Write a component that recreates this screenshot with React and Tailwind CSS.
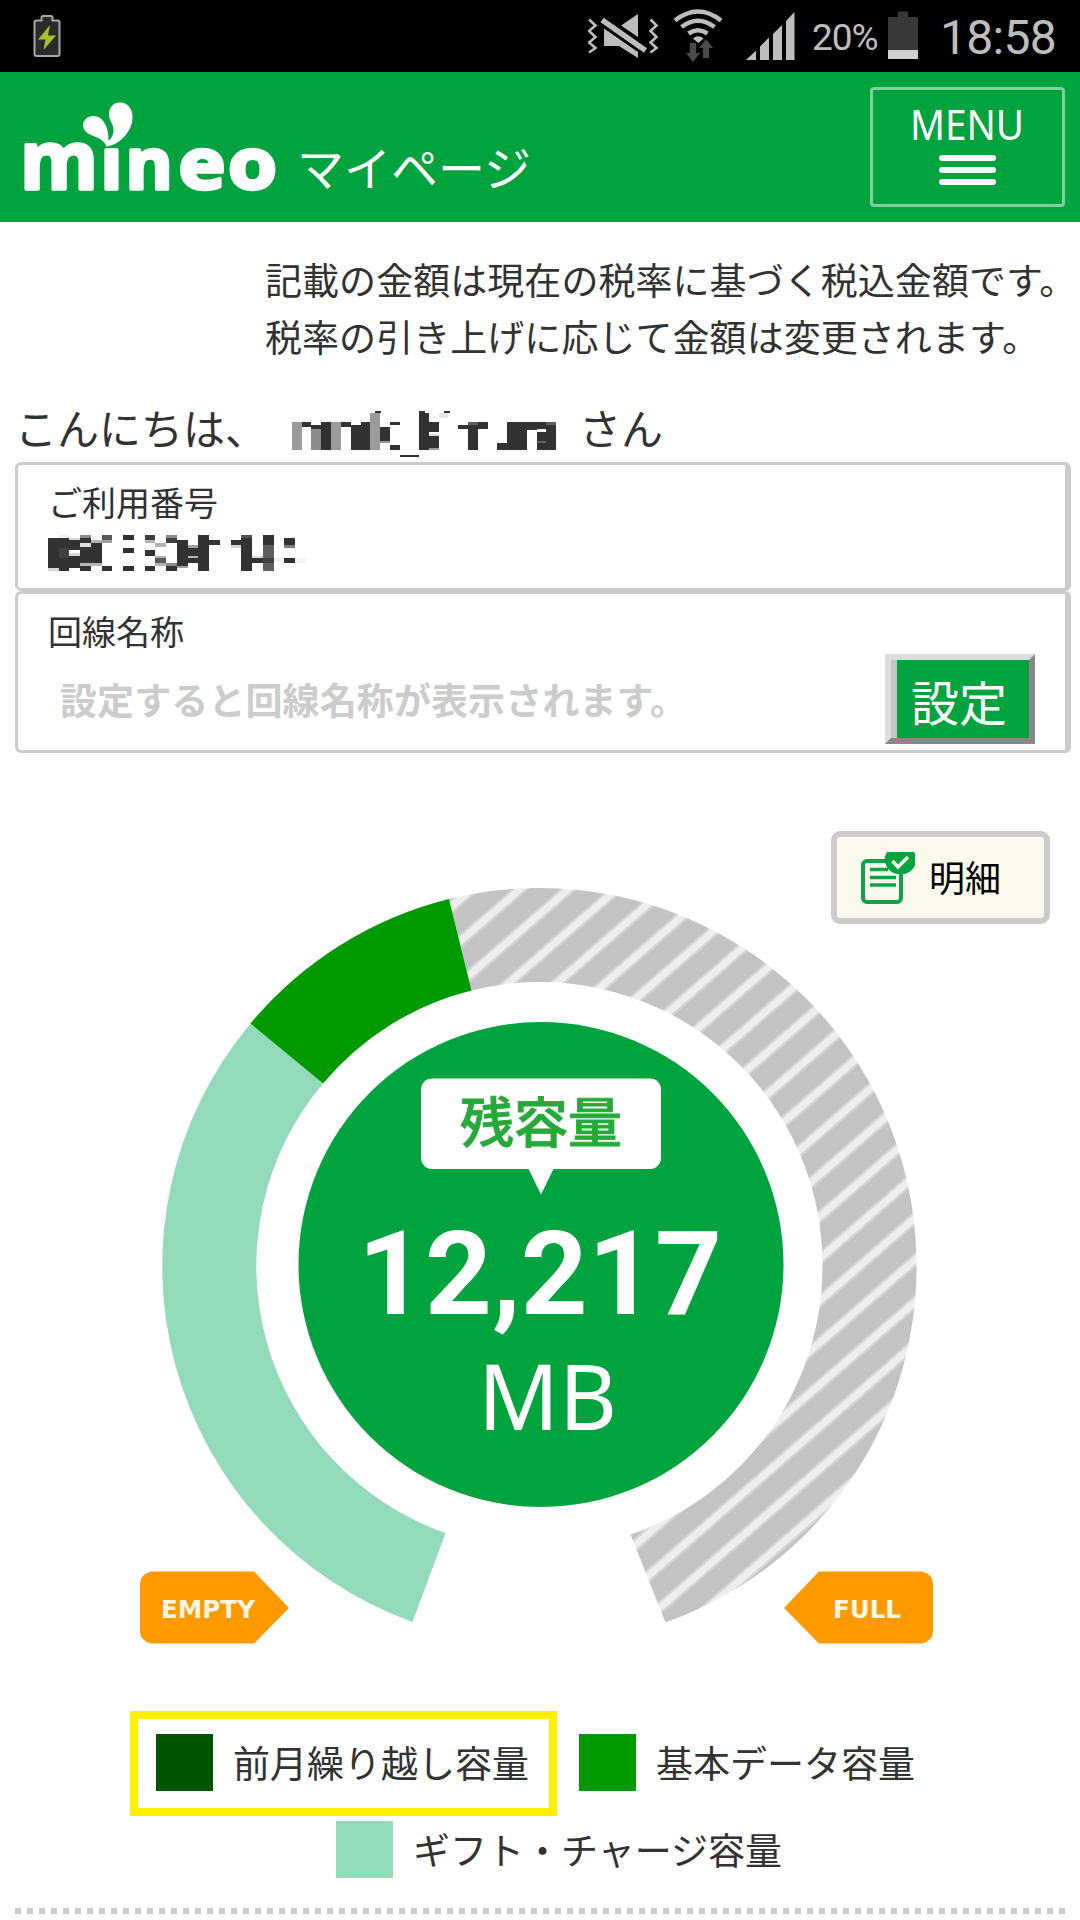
const GREEN = '#00a33e'
const INK = '#323232'

// mosaic blocks hiding the account name: [x, y, w, h, fill]
const NAME_BLOCKS = [
  [755, 66, 31, 84, '#9b9b9b'], [786, 66, 27, 15, INK], [813, 75, 30, 12, INK], [813, 87, 30, 63, '#8c8c8c'],
  [843, 66, 30, 84, INK], [873, 66, 30, 84, '#9b9b9b'], [903, 66, 30, 14, INK], [933, 75, 28, 75, INK],
  [961, 66, 29, 84, INK], [990, 39, 30, 111, '#9b9b9b'], [1004, 33, 18, 6, INK], [1020, 81, 30, 42, INK],
  [1020, 123, 30, 6, '#9b9b9b'], [1050, 66, 30, 9, INK], [1050, 135, 30, 15, INK], [1080, 165, 57, 6, INK],
  [1137, 33, 18, 6, INK], [1137, 39, 30, 111, INK], [1167, 66, 30, 30, INK], [1167, 102, 30, 6, '#dcdcdc'],
  [1167, 108, 30, 36, INK], [1167, 144, 30, 6, '#9b9b9b'], [1197, 39, 26, 14, '#e6e6e6'], [1210, 34, 18, 5, INK],
  [1254, 75, 30, 12, INK], [1284, 66, 30, 9, '#5f5f5f'], [1284, 75, 30, 75, INK], [1314, 66, 30, 21, INK],
  [1371, 129, 30, 21, INK], [1401, 66, 60, 84, INK], [1461, 66, 30, 24, INK], [1491, 66, 27, 21, INK],
  [1491, 96, 27, 27, INK], [1491, 129, 27, 21, INK], [1491, 123, 27, 6, '#5f5f5f'], [1518, 66, 30, 9, '#5f5f5f'],
  [1518, 75, 30, 75, INK],
]

// same for the contract number
const NUMBER_BLOCKS = [
  [24, 414, 33, 90, INK], [24, 504, 33, 9, '#d8d8d8'], [57, 405, 30, 9, '#f2f2f2'], [57, 414, 30, 99, INK],
  [57, 444, 30, 30, '#404040'], [87, 414, 33, 6, '#d8d8d8'], [87, 420, 33, 30, INK], [87, 459, 33, 9, '#d8d8d8'],
  [87, 468, 33, 36, INK], [120, 405, 33, 10, '#8c8c8c'], [120, 415, 33, 15, INK], [120, 430, 33, 12, '#dcdcdc'],
  [120, 442, 33, 47, INK], [120, 489, 33, 9, '#b4b4b4'], [120, 498, 33, 15, INK], [153, 420, 33, 9, '#b4b4b4'],
  [153, 429, 33, 60, INK], [153, 489, 33, 9, '#b4b4b4'], [186, 405, 30, 15, '#5a5a5a'], [186, 420, 30, 9, '#a0a0a0'],
  [186, 498, 30, 15, INK], [249, 405, 33, 15, INK], [249, 444, 33, 15, INK], [249, 498, 33, 15, INK],
  [315, 405, 30, 15, '#404040'], [315, 420, 30, 9, '#b4b4b4'], [315, 450, 30, 18, INK], [315, 498, 30, 15, INK],
  [345, 429, 33, 13, '#b4b4b4'], [345, 468, 33, 6, '#b4b4b4'], [345, 474, 33, 15, '#5a5a5a'], [345, 489, 33, 9, '#b4b4b4'],
  [378, 405, 33, 10, '#8c8c8c'], [378, 415, 33, 14, '#404040'], [378, 489, 33, 9, '#8c8c8c'], [378, 498, 33, 15, INK],
  [411, 420, 33, 78, INK], [411, 498, 33, 6, '#a0a0a0'], [444, 435, 30, 9, '#a0a0a0'], [444, 444, 30, 24, INK],
  [444, 468, 30, 6, '#b4b4b4'], [444, 474, 30, 15, INK], [474, 405, 33, 108, INK], [507, 420, 33, 15, INK],
  [573, 420, 30, 15, INK], [573, 435, 30, 9, '#d2d2d2'], [603, 405, 33, 10, '#505050'], [603, 415, 33, 98, INK],
  [636, 468, 33, 6, '#dcdcdc'], [636, 474, 33, 15, INK], [669, 405, 33, 30, INK], [669, 435, 33, 39, '#5f5f5f'],
  [669, 474, 33, 15, '#404040'], [669, 489, 33, 24, '#5f5f5f'], [702, 474, 30, 10, '#f0f0f0'], [732, 414, 33, 21, INK],
  [732, 435, 33, 9, '#7d7d7d'], [732, 474, 33, 15, INK], [765, 474, 32, 15, '#f3f3f3'],
]

function Mosaic({ blocks, viewBox, className }) {
  return (
    <svg className={className} viewBox={viewBox} shapeRendering="crispEdges">
      {blocks.map(([x, y, w, h, fill], i) => (
        <rect key={i} x={x} y={y} width={w} height={h} fill={fill} />
      ))}
    </svg>
  )
}

function StatusBar() {
  return (
    <div className="flex h-[72px] items-center bg-black pl-[33px] pr-[24px] font-['Roboto',sans-serif] text-[#bdbdbd]">
      <svg className="h-[72px] w-[28px]" viewBox="33 0 28 72">
        <path d="M36.5 20.5h5v-3q0-1.500 1.500-1.500h8q1.500 0 1.500 1.500v3h5q2 0 2 2v31.500q0 2-2 2h-21q-2 0-2-2v-31.500q0-2 2-2z"
          fill="#2b2b2b" stroke="#a8a8a8" strokeWidth="2" />
        <path d="M50 25L38 39.500h7.500L43.500 50 56 35.500h-8z" fill="#a4c22c" />
      </svg>

      <svg className="ml-auto h-[72px] w-[72px]" viewBox="588 0 72 72" fill="#bdbdbd">
        <path d="M589 19.500l6.500 6-6.500 5.500 6.500 6-6.500 5.500 6.500 5.500-6.500 4.500" fill="none" stroke="#bdbdbd" strokeWidth="2.600" />
        <path d="M650.500 19.500l6 6-6 5.500 6 6-6 5.500 6 5.500-6 4.500" fill="none" stroke="#bdbdbd" strokeWidth="2.600" />
        <path d="M621 25.500L638 14v23z" />
        <path d="M604 28.500L638 52v6l-19-12h-15z" />
        <path d="M602 20L645.500 50.500" stroke="#bdbdbd" strokeWidth="5.500" />
      </svg>

      <svg className="ml-[13px] h-[72px] w-[50px]" viewBox="673 0 50 72">
        <g fill="none" stroke="#bdbdbd" strokeWidth="4.600">
          <path d="M675 20.500q23-18 46 0" />
          <path d="M681.500 27q16.500-12.500 33 0" />
          <path d="M688.500 33.500q9.500-6.500 19 0" />
        </g>
        <path d="M693 38.500q5.300-4.500 10.600 0l-5.300 4.500z" fill="#bdbdbd" />
        <path d="M690 43h6v10h4l-7 9-7-9h4z" fill="#4a4a4a" />
        <path d="M703 58h6V48h4l-7-9-7 9h4z" fill="#4a4a4a" />
      </svg>

      <svg className="ml-[23px] h-[72px] w-[49px]" viewBox="746 0 49 72" fill="#bdbdbd">
        <path d="M746 60l10-9.500V60z" />
        <path d="M760 46.500l9-9V60h-9z" />
        <path d="M773 34l9-9V60h-9z" />
        <path d="M786 21l8.500-9V60H786z" />
      </svg>

      <span className="ml-[17px] w-[70px] pt-[3px] text-[37px] leading-[72px] -tracking-[1px]">20%</span>

      <svg className="ml-[6px] h-[72px] w-[30px]" viewBox="888 0 30 72">
        <path d="M898 11.500h10V17h10v33h-30V17h10z" fill="#383838" />
        <path d="M888 50h30v9h-30z" fill="#cfcfcf" />
      </svg>
      <span className="ml-[22px] w-[116px] whitespace-nowrap pt-[3px] text-[48px] leading-[72px] -tracking-[0.7px]">18:58</span>
    </div>
  )
}

function Logo() {
  return (
    <svg className="mt-[8px] h-[125px] w-[260px] overflow-visible" viewBox="22 95 260 125" fill="#fff">
      <text y="189" fontFamily="Open Sans, sans-serif" fontWeight="700" fontSize="72" stroke="#fff" strokeWidth="3.500"
        strokeLinejoin="round">
        <tspan x="20" fontSize="81" textLength="78" lengthAdjust="spacingAndGlyphs">m</tspan>
        <tspan x="100.500">i</tspan>
        <tspan x="125.500">n</tspan>
        <tspan x="178.500" textLength="47" lengthAdjust="spacingAndGlyphs">e</tspan>
        <tspan x="228" textLength="49" lengthAdjust="spacingAndGlyphs">o</tspan>
      </text>
      {/* the two leaves take the place of the dot */}
      <rect x="98" y="120" width="30" height="28" fill={GREEN} />
      <path d="M106.500 146.500C102 134 84 138 83 125.500C83 120 88 116 93 116C104 116 109 128 108.500 141Q113 137 113.500 131C114 124 109.500 122 109 115C108.500 107 114 102.500 120 102.500C128 102.500 133 109 132.500 118C132 131 121 143 109.500 146Z" />
    </svg>
  )
}

function Header() {
  return (
    <header className="flex h-[150px] bg-[#00a33e] pl-[22px] pr-[15px] pt-[15px] text-white">
      <Logo />
      <span className="ml-[15px] mt-[44px] text-[47px] leading-[70px]">マイページ</span>
      <button className="ml-auto flex h-[120px] w-[195px] flex-col items-center rounded-[4px] border-3 border-[#80d19e] pt-[10px]">
        <span className="h-[48px] scale-x-[0.92] font-['Noto_Sans',sans-serif] text-[42px] leading-[48px]">MENU</span>
        <span className="mt-[7px] flex w-[57px] flex-col gap-[6px]">
          <span className="h-[6px] rounded-full bg-white" />
          <span className="h-[6px] rounded-full bg-white" />
          <span className="h-[6px] rounded-full bg-white" />
        </span>
      </button>
    </header>
  )
}

function Gauge() {
  return (
    <svg className="mx-auto -mt-[44px] block h-[770px] w-[820px]" viewBox="130 880 820 770">
      <defs>
        <pattern id="stripes" width="31.7" height="31.7" patternUnits="userSpaceOnUse"
          patternTransform="rotate(-41) translate(0 24.100)">
          <rect width="31.700" height="31.700" fill="#c3c3c3" />
          <rect width="31.700" height="2" fill="#d6d6d6" />
          <rect y="2" width="31.700" height="7" fill="#eee" />
          <rect y="9" width="31.700" height="2" fill="#d6d6d6" />
        </pattern>
      </defs>

      <path d="M449 899A377 377 0 0 1 916.500 1264.500A377 377 0 0 1 665.500 1622.500L630.500 1534.500A283 283 0 0 0 822.500 1264.500A282.500 282.500 0 0 0 471.500 990.500Z"
        fill="url(#stripes)" />
      <path d="M412.500 1622A378 378 0 0 1 250.500 1023.500L323 1083.500A283 283 0 0 0 445.500 1533Z" fill="#93dabb" />
      <path d="M250.500 1023.500A377 377 0 0 1 449 899L471.500 990.500A282 282 0 0 0 323 1083.500Z" fill="#090" />

      <circle cx="541" cy="1264.500" r="242.500" fill={GREEN} />
      <rect x="421" y="1078.500" width="240" height="90.500" rx="11" fill="#fff" />
      <path d="M528 1168h26l-13 26.500z" fill="#fff" />
      <text x="541" y="1143" textAnchor="middle" fontSize="54" fontWeight="500" fill="#27a93a" stroke="#27a93a"
        strokeWidth="0.800">残容量</text>
      <text x="540" y="1314" textAnchor="middle" fontFamily="Roboto, sans-serif" fontSize="117.500" fontWeight="700" fill="#fff"
        textLength="364" lengthAdjust="spacingAndGlyphs">12,217</text>
      <text x="547.500" y="1429.500" textAnchor="middle" fontFamily="Noto Sans, sans-serif" fontSize="92" fill="#fff"
        textLength="139" lengthAdjust="spacingAndGlyphs">MB</text>

      <path d="M151 1571.500h103L289 1608l-35 35.500H151q-11-3-11-12v-48q0-9 11-12z" fill="#ff9900" />
      <text x="208" y="1618" textAnchor="middle" fontFamily="DejaVu Sans, sans-serif" fontSize="25" fontWeight="700"
        fill="#fff6e4" textLength="94" lengthAdjust="spacingAndGlyphs">EMPTY</text>
      <path d="M922 1571.500H819L784 1608l35 35.500h103q11-3 11-12v-48q0-9-11-12z" fill="#ff9900" />
      <text x="867" y="1618" textAnchor="middle" fontFamily="DejaVu Sans, sans-serif" fontSize="25" fontWeight="700"
        fill="#fff6e4" textLength="68" lengthAdjust="spacingAndGlyphs">FULL</text>
    </svg>
  )
}

function Legend({ color, label }) {
  return (
    <div className="flex items-center gap-[20px]">
      <span className={`size-[57px] ${color}`} />
      <span className="text-[37px] leading-[57px]">{label}</span>
    </div>
  )
}

export default function App() {
  return (
    <div lang="ja" className="h-[1920px] w-[1080px] overflow-hidden bg-white font-['Noto_Sans_CJK_JP',sans-serif] text-[#323232]">
      <StatusBar />
      <Header />

      <p className="whitespace-nowrap pl-[265px] pt-[29px] text-[37px] leading-[57px] tracking-[0.05px]">
        記載の金額は現在の税率に基づく税込金額です。<br />
        税率の引き上げに応じて金額は変更されます。
      </p>

      <div className="flex whitespace-nowrap pl-[15px] pt-[27px] text-[42px] leading-[70px]">
        <span className="w-[277px]">こんにちは、</span>
        <Mosaic blocks={NAME_BLOCKS} viewBox="755 30 795 144" className="mt-[18px] h-[48px] w-[265px]" />
        <span className="ml-[22px]">さん</span>
      </div>

      <section className="ml-[15px] mr-[9px] h-[129px] rounded-[6px] border-3 border-r-6 border-[#ccc] pl-[30px] pt-[17px]">
        <h2 className="text-[34px] leading-[40px]">ご利用番号</h2>
        <Mosaic blocks={NUMBER_BLOCKS} viewBox="24 405 774 108" className="mt-[13px] h-[36px] w-[258px]" />
      </section>

      <section className="ml-[15px] mr-[9px] h-[162px] rounded-[6px] border-3 border-r-6 border-[#ccc] pl-[30px] pr-[30px] pt-[17px]">
        <h2 className="text-[34px] leading-[40px]">回線名称</h2>
        <div className="mt-[3px] flex items-center justify-between">
          <p className="pl-[12px] text-[37px] font-bold leading-[50px] tracking-[0.1px] text-[#ccc]">設定すると回線名称が表示されます。</p>
          <button className="h-[90px] w-[150px] border-6 border-b-[#888] border-l-[#ddd] border-r-[#888] border-t-[#ddd] bg-[#00a33e] text-white">
            <span className="block h-full border-l-6 border-[#c6c6c6] pr-[8px] pt-px text-[48px] leading-[78px]">設定</span>
          </button>
        </div>
      </section>

      <div className="flex justify-end pr-[30px] pt-[78px]">
        <button className="flex h-[93px] w-[219px] items-center rounded-[9px] border-6 border-[#ccc] bg-[#f9f9ee] pl-[24px] text-black">
          <svg className="h-[52px] w-[54px]" viewBox="0 0 54 52">
            <rect x="2" y="9" width="38" height="41" rx="4" fill="none" stroke="#12a148" strokeWidth="4" />
            <path d="M9 17.500h18M9 25.500h26M9 33h26" stroke="#12a148" strokeWidth="3.500" />
            <path d="M26 0h27a14.500 14.500 0 0 1-13.500 22A14.500 14.500 0 0 1 26 0z" fill={GREEN} />
            <path d="M31.500 9l5.500 6L47 5" fill="none" stroke="#f9f9ee" strokeWidth="3.500" />
          </svg>
          <span className="mb-[4px] ml-[14px] text-[36px] leading-[50px]">明細</span>
        </button>
      </div>

      <Gauge />

      <div className="mt-[61px] flex pl-[130px]">
        <div className="h-[105px] w-[427px] border-8 border-[#fff000] pl-[18px] pt-[15px]">
          <Legend color="bg-[#005500]" label="前月繰り越し容量" />
        </div>
        <div className="pl-[22px] pt-[23px]">
          <Legend color="bg-[#009900]" label="基本データ容量" />
        </div>
      </div>
      <div className="pl-[336px] pt-[5px]">
        <Legend color="bg-[#93dabb]" label="ギフト・チャージ容量" />
      </div>

      <div className="ml-[15px] mr-[15px] mt-[30px] h-[6px] bg-[repeating-linear-gradient(90deg,#ccc_0_6px,#fff_6px_12px)]" />
    </div>
  )
}
